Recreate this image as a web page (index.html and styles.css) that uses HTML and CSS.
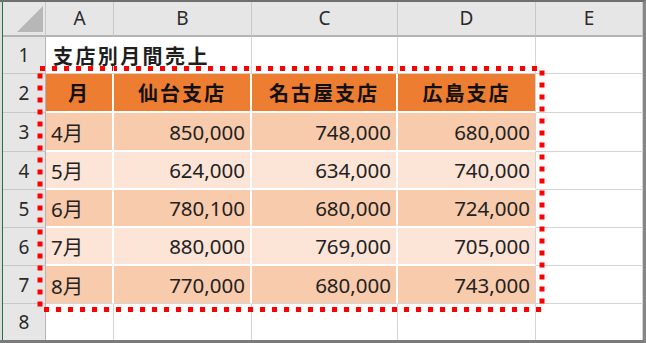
FILE: index.html
```html
<!DOCTYPE html>
<html lang="ja">
<head>
<meta charset="utf-8">
<link rel="stylesheet" href="styles.css">
</head>
<body>
<div class="frame">
  <div class="edge">
    <div class="sheet">
      <div class="corner">
        <svg width="43" height="35" viewBox="0 0 43 35"><polygon points="40,4 40,30 14,30" fill="#b7b7b7"/></svg>
      </div>
      <div class="ch">A</div><div class="ch">B</div><div class="ch">C</div><div class="ch">D</div><div class="ch last">E</div>

      <div class="rh">1</div>
      <div class="c title"><span>支店別月間売上</span></div><div class="c"></div><div class="c"></div><div class="c"></div><div class="c last"></div>

      <div class="rh">2</div>
      <div class="c th">月</div><div class="c th">仙台支店</div><div class="c th">名古屋支店</div><div class="c th end">広島支店</div><div class="c last"></div>

      <div class="rh">3</div>
      <div class="c td dark">4月</div><div class="c td dark num">850,000</div><div class="c td dark num">748,000</div><div class="c td dark num end">680,000</div><div class="c last"></div>

      <div class="rh">4</div>
      <div class="c td light">5月</div><div class="c td light num">624,000</div><div class="c td light num">634,000</div><div class="c td light num end">740,000</div><div class="c last"></div>

      <div class="rh">5</div>
      <div class="c td dark">6月</div><div class="c td dark num">780,100</div><div class="c td dark num">680,000</div><div class="c td dark num end">724,000</div><div class="c last"></div>

      <div class="rh">6</div>
      <div class="c td light">7月</div><div class="c td light num">880,000</div><div class="c td light num">769,000</div><div class="c td light num end">705,000</div><div class="c last"></div>

      <div class="rh">7</div>
      <div class="c td dark bottom">8月</div><div class="c td dark num bottom">770,000</div><div class="c td dark num bottom">680,000</div><div class="c td dark num end bottom">743,000</div><div class="c last"></div>

      <div class="rh lastrow">8</div>
      <div class="c lastrow"></div><div class="c lastrow"></div><div class="c lastrow"></div><div class="c lastrow"></div><div class="c last lastrow"></div>

      <svg class="dots" width="640" height="338" viewBox="0 0 640 338">
        <rect x="37" y="66.5" width="502" height="241" fill="none" stroke="#ff0000" stroke-width="5" stroke-dasharray="5 7"/>
      </svg>
    </div>
  </div>
</div>
</body>
</html>
```

FILE: styles.css
```css
* { box-sizing: border-box; }
html, body { margin: 0; padding: 0; background: #ffffff; }
body {
  font-family: "Noto Sans", "Noto Sans CJK JP", sans-serif;
  color: #1e1e1e;
}
.frame {
  width: 646px;
  height: 343px;
  background: #dcdcdc;
  border-top: 2px solid #6f6f6f;
  border-right: 3px solid #868686;
  border-bottom: 3px solid #7b7b7b;
  padding-left: 2px;
}
.edge {
  height: 100%;
  border-left: 1px solid #217346;
}
.sheet {
  position: relative;
  height: 100%;
  background: #ffffff;
  display: grid;
  grid-template-columns: 43px 68px 138px 146px 138px 107px;
  grid-template-rows: 35px 37px 39px 39px 38px 38px 38px 38px 36px;
}
.corner {
  background: #e6e6e6;
  border-right: 1px solid #c8c8c8;
  border-bottom: 2px solid #b4b4b4;
}
.corner svg { display: block; }
.ch {
  background: #e6e6e6;
  border-right: 1px solid #c8c8c8;
  border-bottom: 2px solid #b4b4b4;
  display: flex;
  align-items: center;
  justify-content: center;
  font-size: 19px;
  color: #2a2a2a;
  padding-bottom: 2px;
}
.ch.last { border-right: 1px solid #c8c8c8; }
.rh {
  background: #e6e6e6;
  border-right: 1px solid #b4b4b4;
  border-bottom: 1px solid #c8c8c8;
  display: flex;
  align-items: center;
  justify-content: center;
  font-size: 19px;
  color: #2a2a2a;
}
.c {
  border-right: 1px solid #d4d4d4;
  border-bottom: 1px solid #d4d4d4;
  display: flex;
  align-items: center;
  font-size: 20.5px;
  white-space: nowrap;
}
.lastrow { border-bottom: none; }
.title {
  border-right-color: #ffffff;
  overflow: visible;
  padding-left: 7px;
  font-size: 20px;
  font-weight: bold;
  letter-spacing: 2.4px;
  position: relative;
  z-index: 1;
}
.th {
  background: #ed7d31;
  border-right: 2px solid #ffffff;
  border-bottom: 2px solid #ffffff;
  justify-content: center;
  font-size: 20px;
  font-weight: bold;
  letter-spacing: 2px;
  color: #111111;
}
.td {
  border-right: 2px solid #ffffff;
  border-bottom: 2px solid #ffffff;
  padding-left: 5px;
  color: #222222;
}
.num {
  justify-content: flex-end;
  padding-right: 5px;
}
.dark { background: #f8cbad; }
.light { background: #fce4d6; }
.end { border-right: 1px solid #d4d4d4; }
.bottom { border-bottom: 1px solid #d4d4d4; }
.dots {
  position: absolute;
  left: 0;
  top: 0;
  pointer-events: none;
}
```
